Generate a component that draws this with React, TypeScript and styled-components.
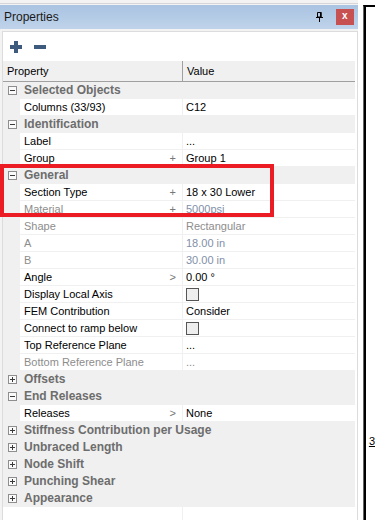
import styled, { createGlobalStyle } from "styled-components";

type Prop = {
  name: string;
  value?: string;
  marker?: "+" | ">";
  dim?: boolean;
  tone?: "dim" | "blue";
  check?: boolean;
};

type Section = { title: string; open: boolean; props?: Prop[] };

const sections: Section[] = [
  { title: "Selected Objects", open: true, props: [{ name: "Columns (33/93)", value: "C12" }] },
  {
    title: "Identification",
    open: true,
    props: [
      { name: "Label", value: "..." },
      { name: "Group", value: "Group 1", marker: "+" },
    ],
  },
  {
    title: "General",
    open: true,
    props: [
      { name: "Section Type", value: "18 x 30 Lower", marker: "+" },
      { name: "Material", value: "5000psi", marker: "+", dim: true, tone: "blue" },
      { name: "Shape", value: "Rectangular", dim: true, tone: "dim" },
      { name: "A", value: "18.00 in", dim: true, tone: "blue" },
      { name: "B", value: "30.00 in", dim: true, tone: "blue" },
      { name: "Angle", value: "0.00 °", marker: ">" },
      { name: "Display Local Axis", check: true },
      { name: "FEM Contribution", value: "Consider" },
      { name: "Connect to ramp below", check: true },
      { name: "Top Reference Plane", value: "..." },
      { name: "Bottom Reference Plane", value: "...", dim: true, tone: "dim" },
    ],
  },
  { title: "Offsets", open: false },
  { title: "End Releases", open: true, props: [{ name: "Releases", value: "None", marker: ">" }] },
  { title: "Stiffness Contribution per Usage", open: false },
  { title: "Unbraced Length", open: false },
  { title: "Node Shift", open: false },
  { title: "Punching Shear", open: false },
  { title: "Appearance", open: false },
];

export default function App() {
  return (
    <>
      <GlobalStyle />
      <Screen>
        <Panel>
          <TopStrip />
          <TitleBar>
            <span>Properties</span>
            <TitleTools>
              <svg width="7" height="10" viewBox="0 0 7 10">
                <path d="M1.5 0.5h3.5v4.5h-3.5z" fill="none" stroke="#000" />
                <rect x="4" y="0" width="1.5" height="5" fill="#000" />
                <rect x="0" y="5" width="7" height="1" fill="#000" />
                <rect x="3" y="6" width="1" height="4" fill="#000" />
              </svg>
              <CloseButton>x</CloseButton>
            </TitleTools>
          </TitleBar>
          <Body>
            <Toolbar>
              <svg width="12" height="12" viewBox="0 0 12 12">
                <rect x="4" y="0" width="4" height="12" fill="#3e5a7c" />
                <rect x="0" y="4" width="12" height="4" fill="#3e5a7c" />
              </svg>
              <svg width="12" height="12" viewBox="0 0 12 12">
                <rect x="0" y="4" width="12" height="4" fill="#3e5a7c" />
              </svg>
            </Toolbar>
            <Header>
              <HeaderCell>Property</HeaderCell>
              <HeaderDivider />
              <HeaderCell>Value</HeaderCell>
            </Header>
            {sections.map((s) => (
              <div key={s.title}>
                <CategoryRow>
                  <Expander>
                    <svg width="9" height="9" viewBox="0 0 9 9">
                      <rect x="0.5" y="0.5" width="8" height="8" fill="#fafafa" stroke="#8e8e8e" />
                      <rect x="2" y="4" width="5" height="1" fill="#3a3a3a" />
                      {!s.open && <rect x="4" y="2" width="1" height="5" fill="#3a3a3a" />}
                    </svg>
                  </Expander>
                  <CategoryTitle>{s.title}</CategoryTitle>
                </CategoryRow>
                {s.open &&
                  s.props?.map((p) => (
                    <PropRow key={p.name}>
                      <Gutter />
                      <NameCell $dim={p.dim}>
                        <span>{p.name}</span>
                        {p.marker && <Marker>{p.marker}</Marker>}
                      </NameCell>
                      <Divider />
                      <ValueCell $tone={p.tone}>
                        {p.check ? <CheckBox /> : p.value}
                      </ValueCell>
                    </PropRow>
                  ))}
              </div>
            ))}
            <Filler>
              <span />
              <Divider />
              <span />
            </Filler>
          </Body>
          <Annotation />
        </Panel>
        <SideWindow>
          <SideLabel>3</SideLabel>
        </SideWindow>
      </Screen>
    </>
  );
}

const GlobalStyle = createGlobalStyle`
  html, body {
    margin: 0;
    padding: 0;
    background: #ffffff;
    overflow: hidden;
  }
  body {
    font-family: "Liberation Sans", Arial, sans-serif;
    font-size: 11px;
    color: #000;
  }
`;

const Screen = styled.div`
  display: flex;
  width: 375px;
  height: 520px;
  overflow: hidden;
  background: #ffffff;
`;

const Panel = styled.div`
  position: relative;
  width: 362px;
  display: flex;
  flex-direction: column;
  background: #f3f3f3;
`;

const TopStrip = styled.div`
  height: 3px;
  background: #f3f3f3;
  border-bottom: 1px solid #d6d6d6;
  margin-bottom: 1px;
`;

const TitleBar = styled.div`
  height: 24px;
  display: flex;
  align-items: center;
  justify-content: space-between;
  padding-left: 4px;
  background: linear-gradient(#a9c3e1, #bfd3ea);
  font-size: 12px;
  color: #1a1a1a;
`;

const TitleTools = styled.div`
  display: flex;
  align-items: center;
  gap: 13px;
  padding-right: 4px;
  svg {
    margin-top: -1px;
  }
`;

const CloseButton = styled.div`
  width: 18px;
  height: 16px;
  background: #c75050;
  color: #fff;
  font-weight: bold;
  font-size: 10px;
  display: flex;
  align-items: center;
  justify-content: center;
  line-height: 1;
  padding-bottom: 2px;
  box-sizing: border-box;
`;

const Body = styled.div`
  flex: 1;
  margin-top: 2px;
  margin-left: 2px;
  border: 1px solid #dcdcdc;
  border-bottom: none;
  padding-right: 2px;
  background: #fff;
  display: flex;
  flex-direction: column;
`;

const Toolbar = styled.div`
  height: 29px;
  display: flex;
  align-items: center;
  gap: 12px;
  padding-left: 7px;
`;

const Header = styled.div`
  height: 20px;
  display: grid;
  grid-template-columns: 179px 1px 1fr;
  background: #f0f0f0;
  border-bottom: 1px solid #a0a0a0;
`;

const HeaderCell = styled.div`
  display: flex;
  align-items: center;
  padding-left: 4px;
  color: #000;
`;

const HeaderDivider = styled.div`
  background: #a0a0a0;
`;

const CategoryRow = styled.div`
  height: 17px;
  display: flex;
  align-items: center;
  background: #f0f0f0;
`;

const Expander = styled.div`
  width: 21px;
  padding-left: 5px;
  box-sizing: border-box;
  display: flex;
  align-items: center;
`;

const CategoryTitle = styled.span`
  font-size: 12px;
  font-weight: bold;
  color: #6d6d6d;
  white-space: nowrap;
  margin-top: -1px;
`;

const PropRow = styled.div`
  height: 16px;
  display: grid;
  grid-template-columns: 17px 162px 1px 1fr;
  border-bottom: 1px solid #f0f0f0;
`;

const Gutter = styled.div`
  background: #f0f0f0;
`;

const NameCell = styled.div<{ $dim?: boolean }>`
  display: flex;
  align-items: center;
  justify-content: space-between;
  padding: 0 6px 0 4px;
  color: ${(p) => (p.$dim ? "#8d8d8d" : "#000")};
  white-space: nowrap;
`;

const Marker = styled.span`
  color: #777;
`;

const Divider = styled.div`
  background: #f0f0f0;
`;

const ValueCell = styled.div<{ $tone?: "dim" | "blue" }>`
  display: flex;
  align-items: center;
  padding-left: 3px;
  white-space: nowrap;
  color: ${(p) => (p.$tone === "dim" ? "#8d8d8d" : p.$tone === "blue" ? "#8290a8" : "#000")};
`;

const CheckBox = styled.span`
  width: 11px;
  height: 11px;
  border: 1px solid #555;
  background: #eeeeee;
`;

const Filler = styled.div`
  flex: 1;
  display: grid;
  grid-template-columns: 179px 1px 1fr;
`;

const Annotation = styled.div`
  position: absolute;
  left: 0;
  top: 164px;
  width: 274px;
  height: 53px;
  box-sizing: border-box;
  border: 4px solid #ec1c24;
  pointer-events: none;
`;

const SideWindow = styled.div`
  margin-left: 5px;
  margin-top: 5px;
  flex: 1;
  border-left: 1px solid #666;
  box-shadow: inset 2px 0 0 #000;
  border-top: 2px solid #000;
  background: #fff;
`;

const SideLabel = styled.div`
  padding: 429px 0 0 5px;
  font-size: 11px;
  line-height: 1;
  text-decoration: underline;
`;
